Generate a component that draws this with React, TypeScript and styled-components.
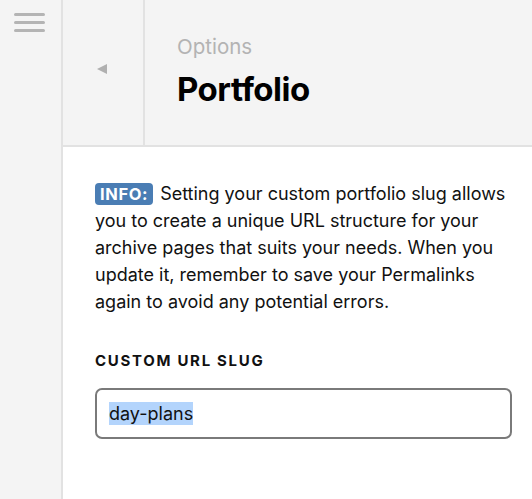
import styled, { createGlobalStyle } from "styled-components";

const GlobalStyle = createGlobalStyle`
  html, body {
    margin: 0;
    padding: 0;
    background: #ffffff;
    font-family: "Inter", "Liberation Sans", sans-serif;
    -webkit-font-smoothing: antialiased;
  }
  #root {
    height: 100vh;
  }
`;

const Layout = styled.div`
  display: flex;
  height: 100vh;
  overflow: hidden;
`;

const Sidebar = styled.aside`
  width: 63px;
  flex-shrink: 0;
  background: #f4f4f4;
  border-right: 2px solid #e2e2e2;
  padding: 13px 0 0 14px;
  box-sizing: border-box;
`;

const Burger = styled.button`
  display: flex;
  flex-direction: column;
  gap: 5px;
  padding: 0;
  border: none;
  background: none;
  cursor: pointer;
`;

const BurgerLine = styled.span`
  display: block;
  width: 31px;
  height: 3px;
  border-radius: 2px;
  background: #b4b4b4;
`;

const Main = styled.main`
  flex: 1;
  display: flex;
  flex-direction: column;
  min-width: 0;
`;

const Header = styled.header`
  display: flex;
  height: 147px;
  box-sizing: border-box;
  background: #f4f4f4;
  border-bottom: 2px solid #e2e2e2;
  flex-shrink: 0;
`;

const BackCol = styled.div`
  width: 82px;
  flex-shrink: 0;
  border-right: 2px solid #e2e2e2;
  display: flex;
  align-items: flex-start;
  justify-content: center;
  padding-top: 64px;
  padding-right: 2px;
  box-sizing: border-box;
`;

const BackArrow = styled.span`
  width: 0;
  height: 0;
  border-top: 5px solid transparent;
  border-bottom: 5px solid transparent;
  border-right: 10px solid #b0b0b0;
`;

const TitleBlock = styled.div`
  padding: 34px 0 0 32px;
`;

const Crumb = styled.div`
  font-size: 20.5px;
  color: #b3b3b3;
  line-height: 26px;
`;

const Title = styled.h1`
  margin: 10px 0 0;
  font-size: 33px;
  font-weight: 700;
  letter-spacing: -0.5px;
  color: #000;
  line-height: 38px;
`;

const Content = styled.section`
  padding: 33px 20px 0 32px;
`;

const Info = styled.p`
  margin: 0;
  font-size: 18px;
  line-height: 27px;
  color: #111;
`;

const Badge = styled.span`
  display: inline-block;
  background: #4a7db4;
  color: #fff;
  font-weight: 700;
  font-size: 16.5px;
  line-height: 22px;
  padding: 0 5px;
  border-radius: 4px;
  letter-spacing: 0.6px;
  margin-right: 7px;
`;

const Label = styled.label`
  display: block;
  margin-top: 36px;
  font-size: 15px;
  font-weight: 700;
  letter-spacing: 1.7px;
  color: #111;
`;

const SlugInput = styled.div`
  margin-top: 18px;
  height: 51px;
  box-sizing: border-box;
  border: 2px solid #7a7a7a;
  border-radius: 7px;
  display: flex;
  align-items: center;
  padding: 0 12px;
  font-size: 18px;
  color: #111;
`;

const Selected = styled.span`
  background: #b3d4fc;
  line-height: 23px;
`;

export default function App() {
  return (
    <>
      <GlobalStyle />
      <Layout>
        <Sidebar>
          <Burger aria-label="Menu">
            <BurgerLine />
            <BurgerLine />
            <BurgerLine />
          </Burger>
        </Sidebar>
        <Main>
          <Header>
            <BackCol>
              <BackArrow />
            </BackCol>
            <TitleBlock>
              <Crumb>Options</Crumb>
              <Title>Portfolio</Title>
            </TitleBlock>
          </Header>
          <Content>
            <Info>
              <Badge>INFO:</Badge>Setting your custom portfolio slug allows you to create a
              unique URL structure for your archive pages that suits your needs. When you
              update it, remember to save your Permalinks again to avoid any potential errors.
            </Info>
            <Label>CUSTOM URL SLUG</Label>
            <SlugInput>
              <Selected>day-plans</Selected>
            </SlugInput>
          </Content>
        </Main>
      </Layout>
    </>
  );
}
